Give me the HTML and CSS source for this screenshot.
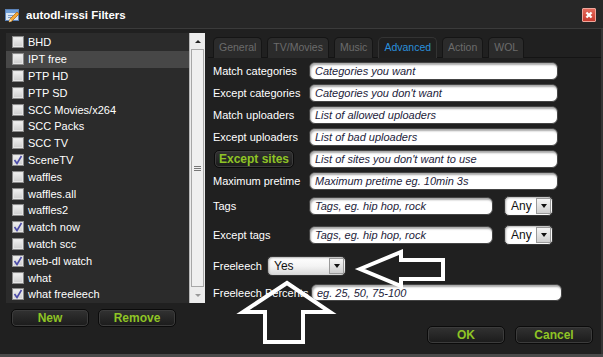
FILE: index.html
```html
<!DOCTYPE html>
<html>
<head>
<meta charset="utf-8">
<link rel="stylesheet" href="styles.css">
</head>
<body>
<div class="window">
  <header class="titlebar">
    <svg class="app-icon" width="15" height="15" viewBox="0 0 15 15">
      <rect x="0.5" y="1.5" width="13" height="11" fill="#d8e6f4" stroke="#5b82b8"/>
      <rect x="1" y="2" width="12" height="3" fill="#6f9fd8"/>
      <line x1="3" y1="7.5" x2="8" y2="7.5" stroke="#7a9cc8"/>
      <line x1="3" y1="9.5" x2="7" y2="9.5" stroke="#7a9cc8"/>
      <path d="M4 14 L5 11 L12 4 L14 6 L7 13 Z" fill="#f2a93b" stroke="#b36b12" stroke-width="0.8"/>
      <path d="M4 14 L5 11 L7 13 Z" fill="#f6e0b0"/>
    </svg>
    <span class="title">autodl-irssi Filters</span>
    <span class="close">
      <svg width="14" height="14" viewBox="0 0 14 14">
        <line x1="4" y1="4" x2="10" y2="10" stroke="#fff" stroke-width="2.6"/>
        <line x1="10" y1="4" x2="4" y2="10" stroke="#fff" stroke-width="2.6"/>
      </svg>
    </span>
  </header>
  <div class="main">
    <div class="left">
      <div class="list">
        <ul class="items">
          <li><span class="cb"></span>BHD</li>
          <li class="sel"><span class="cb"></span>IPT free</li>
          <li><span class="cb"></span>PTP HD</li>
          <li><span class="cb"></span>PTP SD</li>
          <li><span class="cb"></span>SCC Movies/x264</li>
          <li><span class="cb"></span>SCC Packs</li>
          <li><span class="cb"></span>SCC TV</li>
          <li><span class="cb on"><svg width="10" height="10" viewBox="0 0 10 10"><path d="M1.5 5 L4 8.5 L8.5 1" fill="none" stroke="#4a4aa8" stroke-width="1.6"/></svg></span>SceneTV</li>
          <li><span class="cb"></span>waffles</li>
          <li><span class="cb"></span>waffles.all</li>
          <li><span class="cb"></span>waffles2</li>
          <li><span class="cb on"><svg width="10" height="10" viewBox="0 0 10 10"><path d="M1.5 5 L4 8.5 L8.5 1" fill="none" stroke="#4a4aa8" stroke-width="1.6"/></svg></span>watch now</li>
          <li><span class="cb"></span>watch scc</li>
          <li><span class="cb on"><svg width="10" height="10" viewBox="0 0 10 10"><path d="M1.5 5 L4 8.5 L8.5 1" fill="none" stroke="#4a4aa8" stroke-width="1.6"/></svg></span>web-dl watch</li>
          <li><span class="cb"></span>what</li>
          <li><span class="cb on"><svg width="10" height="10" viewBox="0 0 10 10"><path d="M1.5 5 L4 8.5 L8.5 1" fill="none" stroke="#4a4aa8" stroke-width="1.6"/></svg></span>what freeleech</li>
        </ul>
        <div class="scrollbar">
          <span class="sb-btn"><span class="tri-up"></span></span>
          <span class="sb-thumb"><span class="grip"></span></span>
          <span class="sb-btn"><span class="tri-down"></span></span>
        </div>
      </div>
      <div class="btn-row">
        <button class="btn">New</button>
        <button class="btn">Remove</button>
      </div>
    </div>
    <div class="right">
      <nav class="tabs">
        <span class="tab">General</span>
        <span class="tab">TV/Movies</span>
        <span class="tab">Music</span>
        <span class="tab active">Advanced</span>
        <span class="tab">Action</span>
        <span class="tab">WOL</span>
      </nav>
      <div class="panel">
        <div class="row"><label class="lbl">Match categories</label><input class="field" placeholder="Categories you want"></div>
        <div class="row"><label class="lbl">Except categories</label><input class="field" placeholder="Categories you don't want"></div>
        <div class="row"><label class="lbl">Match uploaders</label><input class="field" placeholder="List of allowed uploaders"></div>
        <div class="row"><label class="lbl">Except uploaders</label><input class="field" placeholder="List of bad uploaders"></div>
        <div class="row"><span class="lbl"><button class="btn btn-sites">Except sites</button></span><input class="field" placeholder="List of sites you don't want to use"></div>
        <div class="row"><label class="lbl">Maximum pretime</label><input class="field" placeholder="Maximum pretime eg. 10min 3s"></div>
        <div class="row row-tags"><label class="lbl">Tags</label><input class="field short" placeholder="Tags, eg. hip hop, rock"><span class="select any"><span class="sel-text">Any</span><span class="sel-arrow"><span class="tri-down"></span></span></span></div>
        <div class="row row-xtags"><label class="lbl">Except tags</label><input class="field short" placeholder="Tags, eg. hip hop, rock"><span class="select any"><span class="sel-text">Any</span><span class="sel-arrow"><span class="tri-down"></span></span></span></div>
        <div class="row row-free"><label class="lbl lbl-free">Freeleech</label><span class="select yes"><span class="sel-text">Yes</span><span class="sel-arrow"><span class="tri-down"></span></span></span></div>
        <div class="row row-pct"><label class="lbl lbl-pct">Freeleech Percents</label><input class="field pct" placeholder="eg. 25, 50, 75-100"></div>
      </div>
      <div class="footer">
        <button class="btn">OK</button>
        <button class="btn">Cancel</button>
      </div>
    </div>
  </div>
  <svg class="arrows" width="603" height="357" viewBox="0 0 603 357">
    <polygon points="287,283 330,312 303,312 303,342 265,342 265,312 243,312" fill="none" stroke="#fff" stroke-width="4" stroke-linejoin="miter"/>
    <polygon points="360,269 401,252 401,260 443,260 443,279 401,279 401,286" fill="none" stroke="#fff" stroke-width="4" stroke-linejoin="miter"/>
  </svg>
</div>
</body>
</html>
```

FILE: styles.css
```css
* { box-sizing: border-box; }
html, body { margin: 0; padding: 0; background: #202020; }
body {
  font-family: "Liberation Sans", Arial, sans-serif;
  font-size: 11px;
  color: #fff;
}
.window {
  position: relative;
  width: 603px;
  height: 357px;
  background: #202020;
  display: flex;
  flex-direction: column;
  border-bottom: 3px solid #4a4a4a;
  overflow: hidden;
}
.titlebar {
  height: 29px;
  flex: none;
  display: flex;
  align-items: center;
  padding: 2px 7px 0 5px;
  background: #272727;
  border-bottom: 1px solid #3b3b3b;
}
.app-icon { display: block; margin-right: 6px; }
.title {
  font-weight: bold;
  font-size: 11.5px;
  color: #fff;
  flex: 1;
}
.close {
  width: 14px;
  height: 14px;
  display: flex;
  align-items: center;
  justify-content: center;
  background: linear-gradient(#e46a5c, #c83a2e);
  border: 1px solid #f0a79c;
  border-radius: 1px;
}
.close svg { display: block; }

.main {
  flex: 1;
  display: flex;
  padding-top: 4px;
  border-right: 2px solid #343434;
}
.left {
  width: 199px;
  margin-left: 6px;
  display: flex;
  flex-direction: column;
}
.list {
  height: 270px;
  display: flex;
  background: #2b2b2b;
}
.items {
  list-style: none;
  margin: 0;
  padding: 1px 0 0 0;
  flex: 1;
}
.items li {
  height: 16.8px;
  display: flex;
  align-items: center;
  padding-left: 6px;
  gap: 4px;
  color: #fff;
  white-space: nowrap;
}
.items li.sel { background: #474747; }
.cb {
  width: 12px;
  height: 12px;
  border: 1px solid #8a8a8a;
  background: linear-gradient(#f2f2f2, #cdcdcd);
  box-shadow: inset 0 0 0 1px #e6e6e6;
  display: flex;
  align-items: center;
  justify-content: center;
  flex: none;
}
.cb svg { display: block; }
.scrollbar {
  width: 16px;
  display: flex;
  flex-direction: column;
  background: #ececec;
  border-left: 1px solid #b8b8b8;
}
.sb-btn {
  height: 16px;
  display: flex;
  align-items: center;
  justify-content: center;
  flex: none;
}
.sb-thumb {
  flex: 1;
  margin: 0 1px;
  background: #f0f0f0;
  border: 1px solid #a8a8a8;
  display: flex;
  align-items: center;
  justify-content: center;
}
.grip {
  width: 7px;
  height: 5px;
  border-top: 1px solid #777;
  border-bottom: 1px solid #777;
  position: relative;
}
.grip::after {
  content: "";
  position: absolute;
  left: 0; right: 0; top: 1px;
  border-top: 1px solid #777;
}
.tri-up {
  width: 0; height: 0;
  border-left: 3px solid transparent;
  border-right: 3px solid transparent;
  border-bottom: 3px solid #222;
}
.tri-down {
  width: 0; height: 0;
  border-left: 3.5px solid transparent;
  border-right: 3.5px solid transparent;
  border-top: 4px solid #111;
}
.sb-btn .tri-down {
  border-left-width: 3px;
  border-right-width: 3px;
  border-top: 3px solid #999;
}

.btn-row {
  display: flex;
  gap: 9px;
  padding: 6px 0 0 5px;
}
.btn {
  width: 78px;
  height: 18px;
  padding: 0;
  border: 1px solid #0b0b0b;
  border-radius: 5px;
  background: linear-gradient(#323232, #1b1b1b);
  box-shadow: inset 0 0 0 1px #3c3c3c;
  color: #8fc425;
  font-family: "Liberation Sans", Arial, sans-serif;
  font-weight: bold;
  font-size: 12px;
  line-height: 16px;
}

.right {
  flex: 1;
  margin-left: 3px;
  display: flex;
  flex-direction: column;
}
.tabs {
  display: flex;
  gap: 5px;
  padding-left: 5px;
  margin-top: 4px;
  height: 21px;
  flex: none;
  border-bottom: 1px solid #141414;
}
.tab {
  height: 21px;
  padding: 3px 5px 0;
  background: #2b2b2b;
  border: 1px solid #151515;
  border-bottom: none;
  border-radius: 5px 5px 0 0;
  color: #6c6c6c;
  font-size: 10.5px;
  white-space: nowrap;
}
.tab.active {
  background: #1f1f1f;
  color: #2a8fdc;
  border-color: #333;
}
.panel {
  display: flex;
  flex-direction: column;
  padding: 4px 0 0 5px;
}
.row {
  display: flex;
  align-items: center;
  height: 18px;
  margin-bottom: 4px;
}
.row-tags { height: 20px; margin-top: 2px; margin-bottom: 9px; }
.row-xtags { height: 20px; margin-bottom: 11px; }
.row-free { height: 20px; margin-bottom: 8px; }
.row-pct { height: 17px; }
.lbl {
  width: 96px;
  flex: none;
  color: #fff;
  font-size: 11px;
  white-space: nowrap;
  display: flex;
  align-items: center;
}
.lbl-free { width: 54px; }
.lbl-pct { width: 98px; }
.btn-sites { width: 80px; margin-left: 1px; }
.field {
  width: 249px;
  height: 18px;
  margin: 0;
  padding: 0 0 0 5px;
  border: 1px solid #444;
  border-radius: 6px;
  background: #fff;
  box-shadow: inset 1px 2px 2px rgba(0, 0, 0, 0.35);
  font-family: "Liberation Sans", Arial, sans-serif;
  font-style: italic;
  font-size: 11px;
  color: #1c1c3a;
  outline: none;
}
.field::placeholder { color: #1c1c3a; opacity: 1; font-style: italic; }
.field.short { width: 184px; }
.field.pct { width: 251px; height: 17px; }
.select {
  height: 20px;
  display: flex;
  align-items: center;
  border: 1px solid #333;
  border-radius: 5px;
  background: #fff;
  box-shadow: inset 1px 1px 2px rgba(0, 0, 0, 0.3);
  color: #111;
  font-size: 12px;
}
.select.any { width: 49px; margin-left: 11px; }
.select.yes {
  width: 79px;
  background: linear-gradient(#ffffff, #f4f4f4 50%, #d8d8d8);
}
.sel-text { flex: 1; padding-left: 6px; }
.sel-arrow {
  width: 15px;
  height: 16px;
  margin-right: 1px;
  display: flex;
  align-items: center;
  justify-content: center;
  background: linear-gradient(#f6f6f6, #cfcfcf);
  border: 1px solid #9a9a9a;
}

.footer {
  display: flex;
  justify-content: flex-end;
  gap: 10px;
  padding: 21px 8px 0 0;
}
.footer .btn { height: 18px; }

.arrows {
  position: absolute;
  left: 0;
  top: 0;
  pointer-events: none;
}
```
